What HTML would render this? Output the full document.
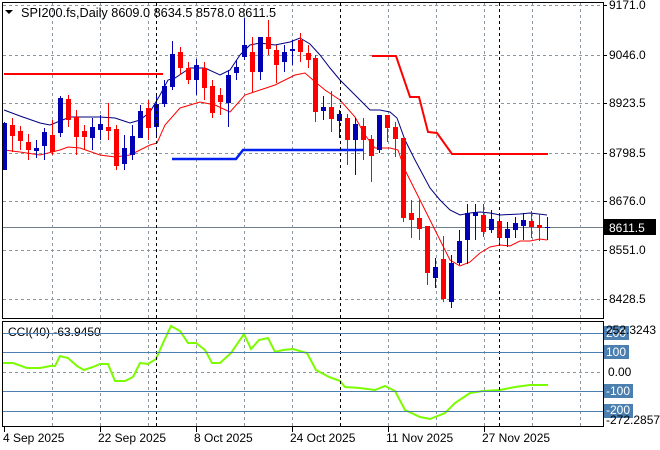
<!DOCTYPE html>
<html><head><meta charset="utf-8"><style>
body{margin:0;background:#fff;}
svg{display:block;font-family:"Liberation Sans",sans-serif;}
</style></head><body>
<svg id="s" width="660" height="450" xmlns="http://www.w3.org/2000/svg">
<rect width="660" height="450" fill="#fff"/>
<g id="grid" stroke="#8a96a0" stroke-dasharray="3,3" stroke-width="1">
</g>
<g id="main"></g>
<rect x="2.5" y="2.5" width="601" height="316" fill="none" stroke="#000"/>
<rect x="2.5" y="321.5" width="601" height="105" fill="none" stroke="#000"/>
<path d="M5 10 L13 10 L9 14 Z" fill="#000"/>
<text x="21" y="17" font-size="12.7">SPI200.fs,Daily  8609.0 8634.5 8578.0 8611.5</text>
<text x="8" y="336" font-size="12">CCI(40) -63.9450</text>
<g font-size="12" fill="#000">
<text x="609" y="9">9171.0</text>
<text x="609" y="59">9046.0</text>
<text x="609" y="107">8923.5</text>
<text x="609" y="157">8798.5</text>
<text x="609" y="205">8676.0</text>
<rect x="604" y="219" width="52" height="16" fill="#000"/>
<text x="609" y="232" fill="#fff">8611.5</text>
<text x="609" y="254">8551.0</text>
<text x="609" y="303">8428.5</text>
<rect x="604" y="326" width="25" height="14" fill="#4a7fb0"/>
<text x="606" y="337" fill="#fff">200</text>
<text x="606" y="334">252.3243</text>
<rect x="604" y="345" width="25" height="14" fill="#4a7fb0"/>
<text x="606" y="356" fill="#fff">100</text>
<text x="608" y="376">0.00</text>
<rect x="604" y="384" width="29" height="14" fill="#4a7fb0"/>
<text x="606" y="395" fill="#fff">-100</text>
<rect x="604" y="404" width="29" height="14" fill="#4a7fb0"/>
<text x="606" y="414" fill="#fff">-200</text>
<text x="606" y="424">-272.2857</text>
<text x="3" y="442">4 Sep 2025</text>
<text x="98" y="442">22 Sep 2025</text>
<text x="194" y="442">8 Oct 2025</text>
<text x="290" y="442">24 Oct 2025</text>
<text x="386" y="442">11 Nov 2025</text>
<text x="482" y="442">27 Nov 2025</text>
</g>
</svg>
<script>
var NS="http://www.w3.org/2000/svg";
function el(p,t,a){var e=document.createElementNS(NS,t);for(var k in a)e.setAttribute(k,a[k]);p.appendChild(e);return e;}
var s=document.getElementById('s'),g=document.getElementById('grid'),m=document.getElementById('main');
[5,55,103,153,201,250,299].forEach(function(y){el(g,'line',{x1:3,x2:603,y1:y+.5,y2:y+.5});el(s,'line',{x1:603,x2:607,y1:y+.5,y2:y+.5,stroke:'#000'});});
el(g,'line',{x1:3,x2:603,y1:372.5,y2:372.5});
for(var x=52;x<600;x+=48){if(x==340)continue;el(g,'line',{x1:x+.5,x2:x+.5,y1:3,y2:426});}
[156,340,499].forEach(function(x){el(s,'line',{x1:x+.5,x2:x+.5,y1:3,y2:426,stroke:'#000','stroke-dasharray':'3,3'});});
[4,100,196,292,388,484].forEach(function(x){el(s,'line',{x1:x+.5,x2:x+.5,y1:427,y2:432,stroke:'#000'});});
[333,352,391,411].forEach(function(y){el(s,'line',{x1:3,x2:603,y1:y+.5,y2:y+.5,stroke:'#4a7fb0'});});
el(m,'line',{x1:3,x2:603,y1:227.5,y2:227.5,stroke:'#708090'});
function pl(pts,c,w){el(m,'polyline',{points:pts,fill:'none',stroke:c,'stroke-width':w});}
pl("4,74 163,74",'#f00',2);
pl("372,56 396,56 410,97 419,97 428,132 437,133 452,154 548,154",'#f00',2);
pl("172,159 236,159 243,150 363,150",'#0020f0',2.5);
pl("4,110 20,116 40,123 50,125 60,121 70,117 85,117 100,117 115,118 130,123 140,120 150,112 160,95 168,80 175,78 190,68 205,68 220,75 230,70 240,55 250,45 260,43 275,45 290,42 300,38 310,44 320,55 330,68 340,80 355,95 370,110 380,110 390,112 397,118 405,140 415,160 430,188 440,200 450,210 460,215 470,213 480,212 490,213 500,215 520,214 530,213 547,215",'#000080',1);
pl("4,150 20,152 40,155 60,150 68,147 80,148 100,155 115,157 130,155 150,145 157,143 165,125 180,108 200,102 215,105 230,112 245,95 260,90 275,85 295,75 305,73 313,80 325,90 340,100 355,117 365,135 375,148 390,148 398,150 405,170 420,200 435,230 450,260 460,266 470,262 480,253 490,247 500,245 510,246 520,241 530,241 540,239 547,240",'#f00',1);
var C=[[4,'B',123,170,122,170],[12,'R',125,136,118,152],[20,'R',131,141,126,150],[28,'R',142,150,134,160],[36,'B',148,151,140,158],[44,'B',132,146,128,160],[52,'R',135,152,120,155],[60,'B',98,133,96,137],[68,'R',99,120,95,127],[76,'R',117,137,110,155],[84,'R',131,137,125,150],[92,'B',127,138,118,150],[100,'B',124,130,115,140],[108,'R',127,131,103,140],[116,'R',129,166,125,170],[124,'B',148,164,135,170],[132,'B',136,155,125,160],[140,'B',111,138,105,138],[148,'R',108,128,100,140],[156,'B',104,127,96,136],[164,'B',86,104,80,107],[172,'B',54,87,41,90],[180,'R',52,68,47,75],[188,'R',68,80,62,84],[196,'B',65,80,59,95],[204,'R',68,88,62,100],[212,'R',86,113,80,118],[220,'R',95,102,88,115],[228,'B',75,103,70,127],[236,'B',67,73,60,80],[244,'B',45,57,18,60],[252,'R',52,72,37,93],[260,'B',37,72,37,80],[268,'R',37,49,20,55],[276,'R',50,65,45,83],[284,'B',52,62,45,72],[292,'B',49,51,40,65],[300,'R',40,52,33,62],[308,'R',53,60,45,68],[315,'R',58,112,55,122],[323,'B',107,111,96,120],[331,'R',107,119,91,132],[339,'B',114,121,110,138],[347,'R',118,140,114,165],[355,'B',124,140,118,175],[363,'R',126,140,118,160],[371,'R',139,156,135,182],[379,'B',115,150,115,153],[387,'R',115,128,115,142],[395,'R',127,139,122,157],[403,'R',138,218,138,222],[411,'R',213,220,200,238],[419,'R',218,229,200,240],[427,'R',226,273,226,285],[435,'B',267,278,258,288],[443,'R',259,299,236,302],[451,'B',263,302,255,308],[459,'B',241,263,230,265],[467,'B',213,240,204,264],[475,'B',212,216,204,240],[483,'R',215,232,204,237],[491,'B',219,230,210,233],[499,'R',221,238,215,244],[507,'B',229,238,222,247],[515,'B',223,230,217,238],[523,'B',220,226,213,240],[531,'R',221,227,211,238],[539,'R',225,228,214,241],[547,'B',227,228,217,240]];
C.forEach(function(c){var col=c[1]=='R'?'#f00':'#0000b4';el(m,'line',{x1:c[0]+.5,x2:c[0]+.5,y1:c[4],y2:c[5],stroke:col});el(m,'rect',{x:c[0]-2,y:c[2],width:5,height:Math.max(1,c[3]-c[2]),fill:col});});
pl("3,363 13,363 27,368 40,368 50,366 55,366 60,356 68,358 77,366 84,370 93,367 100,364 108,364 115,381 125,381 133,377 140,363 148,364 156,359 163,343 171,326 180,331 188,343 196,343 205,350 212,363 220,363 231,353 244,334 251,349 259,340 268,338 275,352 283,350 293,349 303,352 307,353 316,370 329,377 340,381 345,387 360,388 375,390 385,386 395,391 405,410 420,417 430,419 445,413 455,403 470,393 483,391 500,390 515,387 530,385 548,385",'#7cfc00',2);
</script>
</body></html>
